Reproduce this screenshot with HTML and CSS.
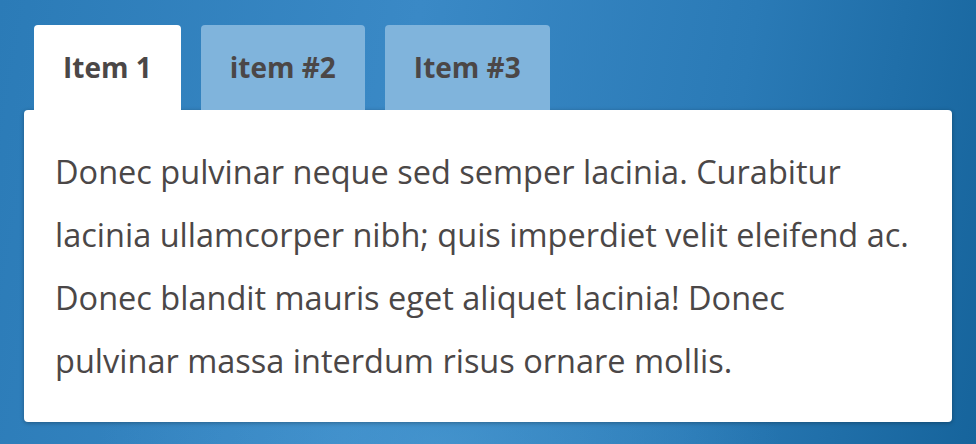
FILE: index.html
```html
<!DOCTYPE html>
<html lang="en">
<head>
    <meta charset="UTF-8">
    <meta name="viewport" content="width=device-width, initial-scale=1.0">
    <title>Tabs</title>
    <link rel="stylesheet" href="styles.css">
</head>
<body>
    <div class="tabs">
        <ul class="tab-list">
            <li class="tab active">Item 1</li>
            <li class="tab">item #2</li>
            <li class="tab">Item #3</li>
        </ul>
        <div class="tab-panel">
            <p>Donec pulvinar neque sed semper lacinia. Curabitur lacinia ullamcorper nibh; quis imperdiet velit eleifend ac. Donec blandit mauris eget aliquet lacinia! Donec pulvinar massa interdum risus ornare mollis.</p>
        </div>
    </div>
</body>
</html>
```

FILE: styles.css
```css
html, body { height: 100%; }
body { margin: 0; padding: 25px 24px; box-sizing: border-box; font-family: "Open Sans", "Noto Sans", sans-serif; color: #4b4747;
    background: radial-gradient(ellipse 35% 30% at 45% 100%, rgba(80,160,215,0.5), rgba(80,160,215,0)),
                linear-gradient(100deg, #2b7bb7 0%, #3a89c6 40%, #2a7ab6 72%, #16649c 100%); }
.tab-list { display: flex; gap: 20px; list-style: none; margin: 0; padding: 0 0 0 10px; }
.tab { height: 85px; line-height: 85px; padding: 0 29px; font-size: 28px; font-weight: bold; background: #80b4dc; border-radius: 4px 4px 0 0; }
.tab.active { background: #fff; }
.tab-panel { background: #fff; border-radius: 4px; padding: 30px 42px 30px 31px; box-shadow: 0 1px 4px rgba(0,0,0,0.3); }
.tab-panel p { margin: 0; font-size: 32.5px; line-height: 63px; }
```
